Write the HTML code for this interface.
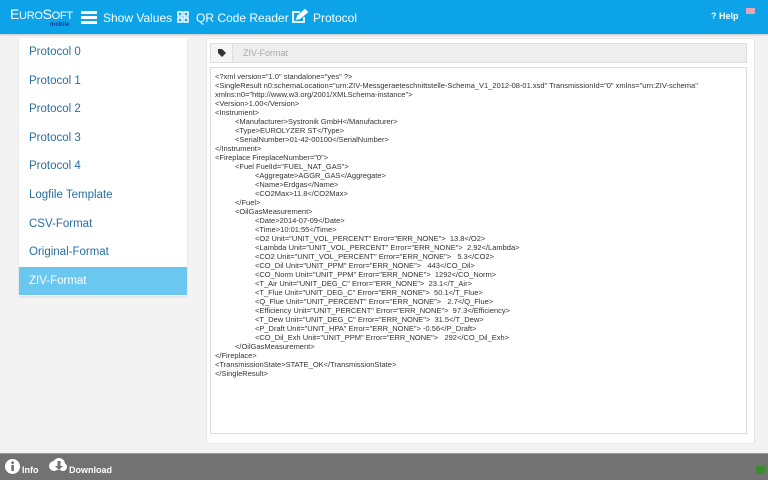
<!DOCTYPE html>
<html><head><meta charset="utf-8"><style>
*{margin:0;padding:0;box-sizing:border-box}
body{width:768px;height:480px;overflow:hidden;background:#f3f3f3;font-family:"Liberation Sans",Arial,sans-serif;position:relative}
.hdr{position:absolute;left:0;top:0;width:768px;height:34px;background:#0da3e8;color:#fff;box-shadow:0 1px 2px rgba(0,0,0,.2)}
.hdr .t{position:absolute;top:11px;font-size:12px}
.side{position:absolute;left:19px;top:38px;width:168px;height:258px;background:#fff;box-shadow:0 1px 2px rgba(0,0,0,.1)}
.side div{height:28.6px;line-height:28px;padding-left:10px;font-size:11.5px;color:#2a6f9e}
.side .act{background:#6ac8f0;color:#fff}
.main{position:absolute;left:206px;top:38px;width:549px;height:406px;background:#fff;border:1px solid #e6e6e6;border-radius:3px}
.ig{position:absolute;left:3px;top:4px;width:537px;height:20px;border:1px solid #ddd;background:#eee}
.ig .ad{position:absolute;left:0;top:0;width:22px;height:18px;border-right:1px solid #ddd;background:#f5f5f5}
.ig .v{position:absolute;left:32px;top:4px;font-size:9px;color:#aaa}
.ta{position:absolute;left:3px;top:28px;width:537px;height:367px;border:1px solid #ddd;background:#fff;padding:4px 4px;font-size:7.5px;line-height:9px;color:#333;white-space:pre;overflow:hidden;tab-size:20px}
.ftr{position:absolute;left:0;top:453px;width:768px;height:27px;background:#727272;border-top:1px solid #999;color:#fff;font-size:9px;font-weight:bold}
</style></head><body>
<div class="hdr">
 <div style="position:absolute;left:10px;top:6px;font-size:14px;letter-spacing:-.3px">E<span style="font-size:11px">URO</span>S<span style="font-size:11px">OFT</span></div>
 <div style="position:absolute;left:50px;top:22px;font-size:6px;font-weight:bold;color:#1a3c9a">mobile</div>
 <svg style="position:absolute;left:81px;top:11px" width="16" height="13"><rect x="0" y="0" width="16" height="3" fill="#fff"/><rect x="0" y="5" width="16" height="3" fill="#fff"/><rect x="0" y="10" width="16" height="3" fill="#fff"/></svg>
 <span class="t" style="left:103px">Show Values</span>
 <svg style="position:absolute;left:177px;top:11px" width="12" height="12" fill="none" stroke="#fff" stroke-width="1.5"><rect x="1" y="1" width="4" height="4"/><rect x="7" y="1" width="4" height="4"/><rect x="1" y="7" width="4" height="4"/><rect x="7" y="7" width="4" height="4"/></svg>
 <span class="t" style="left:196px">QR Code Reader</span>
 <svg style="position:absolute;left:291px;top:9px" width="17" height="15" fill="none" stroke="#fff" stroke-width="1.8"><path d="M9 3H2v10h11V8"/><path d="M6 10l1-3 7-6 2 2-7 6z" fill="#fff"/></svg>
 <span class="t" style="left:313px">Protocol</span>
 <span style="position:absolute;left:711px;top:11px;font-size:9px;font-weight:bold">? Help</span>
 <div style="position:absolute;left:746px;top:8px;width:9px;height:6px;background:#e9a4b4"></div>
</div>
<div class="side">
 <div>Protocol 0</div><div>Protocol 1</div><div>Protocol 2</div><div>Protocol 3</div><div>Protocol 4</div><div>Logfile Template</div><div>CSV-Format</div><div>Original-Format</div><div class="act">ZIV-Format</div>
</div>
<div class="main">
 <div class="ig"><div class="ad"><svg style="position:absolute;left:7px;top:5px" width="8" height="8"><path d="M0 0h4l4 4-4 4-4-4z" fill="#333"/></svg></div><span class="v">ZIV-Format</span></div>
<div class="ta">&lt;?xml version="1.0" standalone="yes" ?&gt;
&lt;SingleResult n0:schemaLocation="urn:ZIV-Messgeraeteschnittstelle-Schema_V1_2012-08-01.xsd" TransmissionId="0" xmlns="urn:ZIV-schema"
xmlns:n0="http://www.w3.org/2001/XMLSchema-instance"&gt;
&lt;Version&gt;1.00&lt;/Version&gt;
&lt;Instrument&gt;
	&lt;Manufacturer&gt;Systronik GmbH&lt;/Manufacturer&gt;
	&lt;Type&gt;EUROLYZER ST&lt;/Type&gt;
	&lt;SerialNumber&gt;01-42-00100&lt;/SerialNumber&gt;
&lt;/Instrument&gt;
&lt;Fireplace FireplaceNumber="0"&gt;
	&lt;Fuel FuelId="FUEL_NAT_GAS"&gt;
		&lt;Aggregate&gt;AGGR_GAS&lt;/Aggregate&gt;
		&lt;Name&gt;Erdgas&lt;/Name&gt;
		&lt;CO2Max&gt;11.8&lt;/CO2Max&gt;
	&lt;/Fuel&gt;
	&lt;OilGasMeasurement&gt;
		&lt;Date&gt;2014-07-09&lt;/Date&gt;
		&lt;Time&gt;10:01:55&lt;/Time&gt;
		&lt;O2 Unit="UNIT_VOL_PERCENT" Error="ERR_NONE"&gt;  13.8&lt;/O2&gt;
		&lt;Lambda Unit="UNIT_VOL_PERCENT" Error="ERR_NONE"&gt;  2.92&lt;/Lambda&gt;
		&lt;CO2 Unit="UNIT_VOL_PERCENT" Error="ERR_NONE"&gt;   5.3&lt;/CO2&gt;
		&lt;CO_Dil Unit="UNIT_PPM" Error="ERR_NONE"&gt;   443&lt;/CO_Dil&gt;
		&lt;CO_Norm Unit="UNIT_PPM" Error="ERR_NONE"&gt;  1292&lt;/CO_Norm&gt;
		&lt;T_Air Unit="UNIT_DEG_C" Error="ERR_NONE"&gt;  23.1&lt;/T_Air&gt;
		&lt;T_Flue Unit="UNIT_DEG_C" Error="ERR_NONE"&gt;  50.1&lt;/T_Flue&gt;
		&lt;Q_Flue Unit="UNIT_PERCENT" Error="ERR_NONE"&gt;   2.7&lt;/Q_Flue&gt;
		&lt;Efficiency Unit="UNIT_PERCENT" Error="ERR_NONE"&gt;  97.3&lt;/Efficiency&gt;
		&lt;T_Dew Unit="UNIT_DEG_C" Error="ERR_NONE"&gt;  31.5&lt;/T_Dew&gt;
		&lt;P_Draft Unit="UNIT_HPA" Error="ERR_NONE"&gt; -0.56&lt;/P_Draft&gt;
		&lt;CO_Dil_Exh Unit="UNIT_PPM" Error="ERR_NONE"&gt;   292&lt;/CO_Dil_Exh&gt;
	&lt;/OilGasMeasurement&gt;
&lt;/Fireplace&gt;
&lt;TransmissionState&gt;STATE_OK&lt;/TransmissionState&gt;
&lt;/SingleResult&gt;</div>
</div>
<div class="ftr">
 <svg style="position:absolute;left:5px;top:5px" width="15" height="15"><circle cx="7.5" cy="7.5" r="7.5" fill="#fff"/><rect x="6.3" y="6" width="2.6" height="6" fill="#727272"/><circle cx="7.6" cy="3.8" r="1.4" fill="#727272"/></svg>
 <span style="position:absolute;left:22px;top:11px">Info</span>
 <svg style="position:absolute;left:48px;top:4px" width="19" height="14"><circle cx="6" cy="8" r="5" fill="#fff"/><circle cx="11" cy="6" r="6" fill="#fff"/><circle cx="15" cy="9" r="4" fill="#fff"/><path d="M9.5 3h3v5h2.5l-4 4-4-4h2.5z" fill="#727272"/></svg>
 <span style="position:absolute;left:69px;top:11px">Download</span>
 <div style="position:absolute;left:756px;top:12px;width:9px;height:8px;background:#3a8a2e"></div>
</div>
</body></html>
